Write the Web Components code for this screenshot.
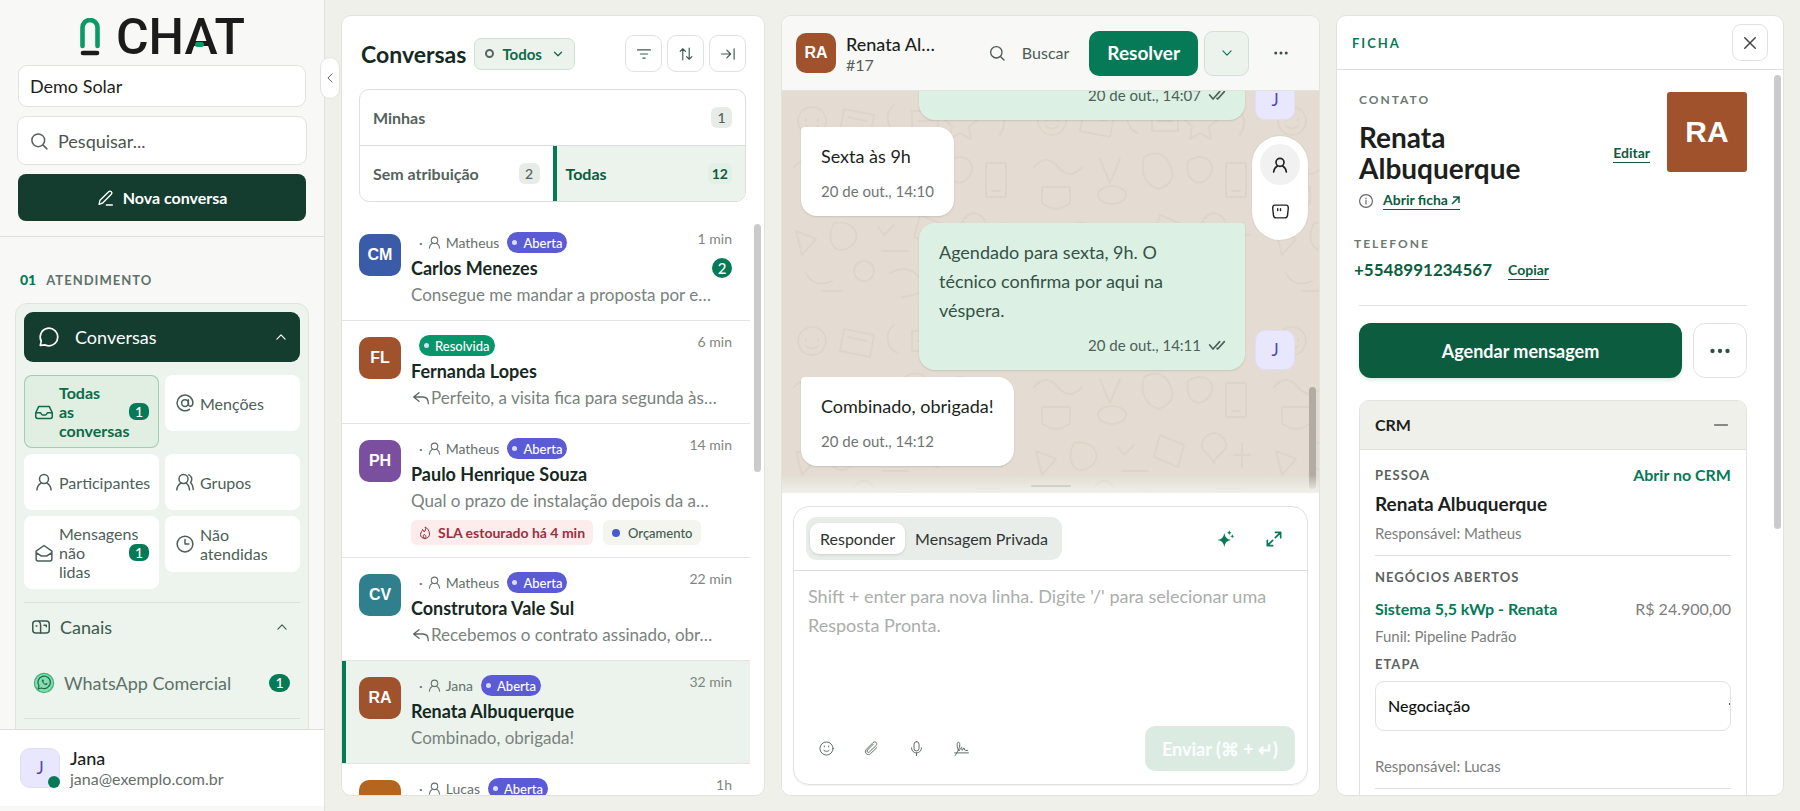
<!DOCTYPE html>
<html lang="pt-BR">
<head>
<meta charset="utf-8">
<meta name="viewport" content="width=device-width, initial-scale=1">
<title>Chat – Conversas</title>
<style>
  :root {
    --bg: #eff0ea; --panel: #fff; --line: #e0e4df; --ink: #1c1f1d; --deep: #143c2f;
    --green: #067a57; --muted: #6f7773; --slate: #4c6058; --mint: #ebf3ec;
  }
  html, body { height: 100%; }
  body { margin: 0; background: var(--bg); color: var(--ink); font: 400 16px/20px Lato, "Open Sans", sans-serif; overflow: hidden; }
</style>
</head>
<body>
<chat-app></chat-app>
<script>
const BASE = `<style>
*{box-sizing:border-box}
:host{display:block}
button,input,select,textarea{font:inherit;color:inherit;margin:0;padding:0;border:0;background:none;text-align:inherit;outline:0}
button{cursor:pointer}
a{color:inherit;text-decoration:none}
h1,h2,h3,p{margin:0;font-weight:inherit;font-size:inherit}
.thumb{position:absolute;width:7px;border-radius:4px;background:#cbcbcb}
</style>`;
function define(name, html) {
  customElements.define(name, class extends HTMLElement {
    connectedCallback() {
      if (this.shadowRoot) return;
      const t = document.createElement('template');
      t.innerHTML = BASE + (typeof html === 'function' ? html(this) : html);
      this.attachShadow({ mode: 'open' }).append(t.content.cloneNode(true));
    }
  });
}

const ICONS = {
  search: '<circle cx="11" cy="11" r="8.500"/><path d="M17.500 17.500l5 5"/>',
  pen: '<path d="M3 21.500l1.500-6L17.500 2.500a2.800 2.800 0 0 1 4 4L8.500 19.500zM14 22.500h9"/>',
  chat: '<path d="M1.500 22l1.200-5A10.500 10.500 0 1 1 7.500 21.500z"/>',
  up: '<path d="M5 15.500l7-7 7 7"/>', down: '<path d="M5 8.500l7 7 7-7"/>', left: '<path d="M17 2L7 12l10 10"/>',
  inbox: '<path d="M1 13L5 4.500h14L23 13v5a2.500 2.500 0 0 1-2.500 2.500h-17A2.500 2.500 0 0 1 1 18zM1 13h6c1 0 1.500 3 3 3h4c1.500 0 2-3 3-3h6"/>',
  at: '<circle cx="12" cy="12" r="4.500"/><path d="M16.500 7.500v6c0 4 6 4 6-1.500A10.500 10.500 0 1 0 18 20.500"/>',
  user: '<circle cx="12" cy="8" r="6"/><path d="M2.500 22.500c.5-5 3-7.500 5.500-9M21.500 22.500c-.5-5-3-7.500-5.500-9"/>',
  users: '<circle cx="10" cy="8" r="6"/><path d="M1 22.500c.5-5 3-7.500 5.500-9M18 22.500c-.5-5-2-7.500-4.500-9M17 2.500c4 1.500 5.500 6 2.500 10.500 2 1.500 3 4 3.500 9"/>',
  mail: '<path d="M1.500 9.500L12 2l10.500 7.500V20a2.500 2.500 0 0 1-2.500 2.500H4A2.500 2.500 0 0 1 1.500 20zM1.500 11.500L8.500 16h7l7-4.500"/>',
  clock: '<circle cx="12" cy="12" r="10.500"/><path d="M12 6v6h5"/>',
  mailbox: '<rect x="1" y="4" width="22" height="16" rx="4"/><path d="M9 4.500c2 1 2.500 3 2.500 5V20M5.500 10.500h1M16 9.500h3v2"/>',
  filter: '<path d="M1 5h22M6 12h12M10 19h4"/>',
  sort: '<path d="M6.500 22V3M2 7.500L6.500 3 11 7.500M17.500 2v19M13 16.500l4.500 4.500 4.500-4.500"/>',
  collapse: '<path d="M1 12h15M10 5.500l6.500 6.500-6.500 6.500M22.500 3v18"/>',
  reply: '<path d="M9 4L1 10.500 9 17M1 10.500h14c5 0 8 3 8 10"/>',
  flame: '<path d="M12 23c-5.500 0-9-3.500-9-8 0-5 4-6 4-10 2 1 3 3 3 5 3-2 4-6 2-10 5 2 9 8 9 14 0 5.500-3.500 9-9 9zM12 23c-4-1-5-4.500-2-8 4 1 5.500 5 2 8z"/>',
  more: '<g fill="currentColor" stroke="none"><circle cx="3" cy="12" r="2.600"/><circle cx="12" cy="12" r="2.600"/><circle cx="21" cy="12" r="2.600"/></g>',
  ticks: '<path d="M1 12l5 6L16 7M12 17l1 1L23 7"/>',
  close: '<path d="M3 3l18 18M21 3L3 21"/>',
  minus: '<path d="M1 12h22"/>',
  info: '<circle cx="12" cy="12" r="11"/><path d="M12 11v6M12 7v1"/>',
  note: '<path d="M4 3h16q3 0 3 4l-1 10q-.5 4-4 4H6q-3.500 0-4-4L1 7q0-4 3-4zM8 8v2.500M12 8v2.500"/>',
  spark: '<g fill="currentColor" stroke="none"><path d="M9.500 3c1.500 7 3.500 9 10 10.500-6.500 1.500-8.500 3.500-10 10.500-1.500-7-3.500-9-10-10.500 6.500-1.500 8.500-3.500 10-10.500zM17 -1c.6 2.400 1.300 3.200 3.700 3.700-2.400.6-3.100 1.300-3.700 3.700-.6-2.400-1.300-3.100-3.700-3.700 2.400-.5 3.100-1.300 3.700-3.700zM21.500 5c.5 2 1.100 2.600 3 3-1.900.5-2.500 1-3 3-.5-2-1.100-2.500-3-3 1.900-.4 2.500-1 3-3z"/></g>',
  expand: '<path d="M14 2h8v8M22 2l-8 8M10 22H2v-8M2 22l8-8"/>',
  smile: '<circle cx="12" cy="12" r="10.500"/><path d="M7.500 14.500c1.500 3 7.500 3 9 0M8.500 8v1.500M15.500 8v1.500"/>',
  clip: '<path d="M15 5L5.500 14.500c-2 2.500 1 5 3 3.200L19.500 7c3-3.500-1.500-7.500-5-4.500L3.500 13.500c-4 5 2.500 11 7 6.800L20.500 10.500"/>',
  mic: '<rect x="8" y="1" width="8" height="15" rx="4"/><path d="M4 11c0 11 16 11 16 0M12 19v4.500"/>',
  sign: '<path d="M1 19h22M2 23c5-7 8-14 7-19-.5-3-4-3-4 1 0 5 1 9 3 11 2-3 3-6 4-6s0 5 1 5 2-4 3-4 0 4 2 4h4"/>',
  wa: '<circle cx="12" cy="12" r="11.500" fill="#86dcae" stroke="#3fb578"/><path d="M5 19l1-3.500A7.500 7.500 0 1 1 9 18z" stroke="#1f6a4b"/><path d="M9.500 8c-1 1.500 3 7 5.500 6.500l1.500-1.500-2-1-1 1c-1-.5-2-1.500-2.300-2.500l.8-.8-1-2z" fill="#1f6a4b" stroke="none"/>'
};
define('ui-icon', el => `<style>:host{display:inline-block;flex:none;line-height:0}svg{width:var(--s,18px);height:var(--s,18px);overflow:visible}</style>
<svg viewBox="0 0 24 24" fill="none" stroke="currentColor" stroke-width="${el.getAttribute('w') || 2}" stroke-linecap="round" stroke-linejoin="round" aria-hidden="true">${ICONS[el.getAttribute('name')]}</svg>`);

define('user-avatar', el => `<style>
:host{flex:none;display:grid;place-items:center;width:var(--a,42px);height:var(--a,42px);border-radius:var(--r,10px);background:${el.getAttribute('tone') || '#a0522d'};color:#fff;font:700 var(--f,16px)/20px "Liberation Sans",Arial,sans-serif}
:host([agent]){background:#e9e7fd;color:#4f46b8;border:1px solid #e0def5;font:400 17px/20px Lato,sans-serif}
</style><slot></slot>`);

define('status-pill', el => `<style>
:host{display:inline-flex;align-items:center;gap:6px;height:21px;padding:0 5px;border-radius:11px;background:${el.hasAttribute('done') ? '#079669' : '#5b5bd6'};color:#fff;font-size:13px;line-height:20px;font-weight:500}
i{width:5px;height:5px;border-radius:50%;background:#d9dbff}</style><i></i><slot></slot>`);

define('nav-tile', el => `<style>
button{display:flex;align-items:center;gap:6px;width:100%;min-height:56px;padding:8px 10px 8px 11px;border-radius:8px;background:#fff;color:var(--slate);line-height:19px}
span{flex:1;min-width:0}
b{flex:none;margin-left:10px;width:20px;height:17px;border-radius:7px;background:var(--green);color:#fff;font-weight:500;font-size:14px;line-height:17px;text-align:center}
:host([on]) button{background:#e0efe2;box-shadow:inset 0 0 0 1px #a3ccb2;color:#0f6a49;font-weight:700}
</style><button><ui-icon name="${el.getAttribute('icon')}"></ui-icon><span><slot></slot></span>${el.hasAttribute('count') ? `<b>${el.getAttribute('count')}</b>` : ''}</button>`);

define('app-sidebar', `<style>
:host{position:relative;display:flex;flex-direction:column;background:#f8f9f7;border-right:1px solid #dfe3de;min-height:0}
.top{display:flex;flex-direction:column;gap:9px;padding:17px 18px 15px;border-bottom:1px solid #dcdfdb}
.logo{display:flex;align-items:center;justify-content:center;gap:16px;height:39px;padding-left:1px}
.logo svg{width:20px;height:38px}
.word{position:relative;font:500 50px/42px Roboto,sans-serif;color:#1b1b1b}
.word i{position:absolute;left:79px;top:26px;width:9px;height:5px;border-radius:3px;background:#0a9a68}
select,.search{border:1px solid var(--line);border-radius:9px;background:#fff}
select{appearance:none;height:42px;padding:0 11px;font-size:18px}
.search{display:flex;align-items:center;gap:10px;height:49px;margin:0 -1px;padding:0 12px;color:#5a625e}
input{flex:1;min-width:0;font-size:18px}
input::placeholder{color:#4d5451;opacity:1}
.new{display:flex;align-items:center;justify-content:center;gap:10px;height:47px;border-radius:8px;background:var(--deep);color:#fff;font-weight:700}
nav{flex:1;min-height:0;overflow:hidden;padding:33px 15px 0}
.label{display:flex;gap:10px;padding-left:5px;font-size:13px;font-weight:700;letter-spacing:1px;color:#5f7169}
.label b{color:var(--green);letter-spacing:0;font-size:14px}
.card{margin-top:13px;padding:8px 8px 100px;border:1px solid var(--line);border-radius:12px;background:#edf4ee}
.row{display:flex;align-items:center;width:100%;font-size:18px}
.row span{flex:1}
.head{height:50px;gap:16px;padding:0 12px 0 15px;border-radius:9px;background:var(--deep);color:#fff}
.tiles{display:grid;grid-template-columns:repeat(2,minmax(0,1fr));gap:6px;align-items:start;margin-top:13px}
hr{margin:0;border:0;border-top:1px solid #d9e1da}
.tiles+hr{margin-top:13px}
.ch{height:48px;gap:10px;padding:0 11px 0 8px;color:#3d5a4d}
.wa{height:64px;gap:10px;padding:0 10px;margin-bottom:3px;color:#5d7167}
.wa b{width:21px;height:18px;border-radius:9px;background:var(--green);color:#fff;font-size:14px;line-height:18px;font-weight:500;text-align:center}
footer{display:flex;gap:10px;align-items:center;height:77px;margin-bottom:5px;padding:0 20px;border-top:1px solid #dcdfdb;background:#fff}
.me{position:relative}.me i{position:absolute;right:0;bottom:0;width:12px;height:12px;border-radius:50%;background:var(--green)}
footer strong{display:block;font-weight:500;font-size:18px;line-height:21px}
footer span{color:#656d69}
.fold{position:absolute;left:320px;top:57px;z-index:2;display:grid;place-items:center;width:20px;height:42px;border:1px solid var(--line);border-radius:10px;background:#fff;color:#444}
</style>
<div class="top">
  <div class="logo"><svg viewBox="0 0 20 38" fill="none" stroke-linecap="round" aria-hidden="true"><path d="M2.500 28V9.500a7.500 7.500 0 0 1 15 0V28" stroke="#0a9a68" stroke-width="4.600"/><path d="M3 35h14" stroke="#1b1b1b" stroke-width="4.600"/></svg><div class="word">CHAT<i></i></div></div>
  <select aria-label="Conta"><option>Demo Solar</option></select>
  <label class="search"><ui-icon name="search"></ui-icon><input type="search" placeholder="Pesquisar..." aria-label="Pesquisar"></label>
  <button class="new"><ui-icon name="pen" style="--s:16px"></ui-icon>Nova conversa</button>
</div>
<nav>
  <div class="label"><b>01</b>ATENDIMENTO</div>
  <div class="card">
    <button class="row head"><ui-icon name="chat" style="--s:20px"></ui-icon><span>Conversas</span><ui-icon name="up" style="--s:14px"></ui-icon></button>
    <div class="tiles">
      <nav-tile icon="inbox" count="1" on>Todas<br>as conversas</nav-tile><nav-tile icon="at">Menções</nav-tile>
      <nav-tile icon="user">Participantes</nav-tile><nav-tile icon="users">Grupos</nav-tile>
      <nav-tile icon="mail" count="1">Mensagens não<br>lidas</nav-tile><nav-tile icon="clock">Não atendidas</nav-tile>
    </div>
    <hr>
    <button class="row ch"><ui-icon name="mailbox"></ui-icon><span>Canais</span><ui-icon name="up" style="--s:14px"></ui-icon></button>
    <a class="row wa" href="#whatsapp"><ui-icon name="wa" w="1.500" style="--s:20px"></ui-icon><span>WhatsApp Comercial</span><b>1</b></a>
    <hr>
  </div>
</nav>
<footer><div class="me"><user-avatar agent style="--a:40px">J</user-avatar><i></i></div><div><strong>Jana</strong><span>jana@exemplo.com.br</span></div></footer>
<button class="fold" aria-label="Recolher menu"><ui-icon name="left" style="--s:10px"></ui-icon></button>`);

define('conversation-item', el => {
  const a = n => el.getAttribute(n);
  return `<style>
:host{display:flex;gap:10px;padding:14px 18px 12px 17px;border-bottom:1px solid #e3e5e2}
:host([on]){background:#ebf3ec;box-shadow:inset 4px 0 #067a57}
user-avatar{margin-top:2px}
.body{flex:1;min-width:0}
.meta{display:flex;align-items:center;height:21px;padding-left:8px;font-size:14px;color:#65716b}
.meta ui-icon{margin:0 5px 0 5px}
.meta status-pill{margin-left:8px}
.meta status-pill:first-child{margin-left:0}
.meta time{margin:-7px 0 0 auto;color:#7f8682}
.name{display:flex;justify-content:space-between;align-items:center;margin-top:1px;height:28px;font-size:18px;font-weight:700;color:#16291f}
.name b{width:20px;height:20px;border-radius:50%;background:var(--green);color:#fff;font-weight:500;font-size:15px;text-align:center}
.msg{display:flex;align-items:center;gap:2px;height:26px;padding-right:20px;font-size:17px;color:#79827d}
.msg span{white-space:nowrap}
.msg ui-icon{margin-left:2px;color:#5e6662}
</style><user-avatar tone="${a('tone')}">${a('initials')}</user-avatar>
<div class="body"><div class="meta">${a('agent') ? `<span>·</span><ui-icon name="user" style="--s:13px"></ui-icon><span>${a('agent')}</span><status-pill>Aberta</status-pill>` : '<status-pill done>Resolvida</status-pill>'}<time>${a('time')}</time></div>
<h3 class="name"><span>${a('name')}</span>${a('unread') ? `<b>${a('unread')}</b>` : ''}</h3>
<p class="msg">${el.hasAttribute('replied') ? '<ui-icon name="reply" style="--s:16px"></ui-icon>' : ''}<span>${a('text') || ''}</span></p><slot></slot></div>`;
});

define('conversation-list', `<style>
:host{position:relative;display:flex;flex-direction:column;min-height:0;overflow:hidden;background:#fff;border:1px solid var(--line);border-radius:10px}
header{display:flex;align-items:center;gap:5px;padding:19px 18px 0 19px}
h2{font-size:23px;line-height:36px;font-weight:700;color:#16291f;margin-right:3px}
.all{display:flex;align-items:center;gap:8px;height:32px;padding:0 10px;border:1px solid #cfe0d2;border-radius:7px;background:#ebf3ec;color:#0f6a49;font-size:15px;font-weight:700}
.all i{width:9px;height:9px;border:2px solid #58675f;border-radius:50%}
.all ui-icon{margin-left:2px}
.sq{display:grid;place-items:center;width:37px;height:37px;border:1px solid var(--line);border-radius:9px;background:#fff;color:#3f5a4e}
.push{margin-left:auto}
.tabs{display:grid;grid-template-columns:1fr 1fr;margin:17px 18px 0 17px;border:1px solid #dcdfdb;border-radius:10px;overflow:hidden}
.tabs button{display:flex;align-items:center;justify-content:space-between;height:55px;padding:0 13px;font-size:16px;font-weight:700;color:#53635b}
.tabs button:first-child{grid-column:1/3;height:56px;border-bottom:1px solid #dcdfdb}
.tabs b{min-width:21px;height:21px;padding:0 4px;border-radius:6px;background:#e8ece8;font-size:14px;line-height:21px;font-weight:500;text-align:center}
.tabs .on{background:#ebf3ec;border-left:4px solid var(--green);padding-left:9px;color:#0c5c40}
.tabs .on b{background:#e2f0e5;font-weight:700}
.list{flex:1;min-height:0;overflow:hidden;margin-top:16px;padding-right:14px}
.tags{display:flex;gap:10px;margin-top:6px}
.tags span{display:flex;align-items:center;gap:8px;height:25px;padding:0 9px;border-radius:6px;font-size:13px}
.sla{background:#fdecec;color:#9b3040;font-weight:700}
.tags .sla{font-size:14px;gap:7px;padding:0 8px}
.tag{background:#f4f5ef;color:#3f5a4e;font-weight:500}
.tag i{width:8px;height:8px;border-radius:50%;background:#4a5bd0}
.thumb{right:3px;top:208px;height:248px}
</style>
<header><h2>Conversas</h2><button class="all"><i></i>Todos<ui-icon name="down" w="2.500" style="--s:12px"></ui-icon></button>
<button class="sq push" aria-label="Filtrar"><ui-icon name="filter" style="--s:14px"></ui-icon></button><button class="sq" aria-label="Ordenar"><ui-icon name="sort" style="--s:14px"></ui-icon></button><button class="sq" aria-label="Expandir"><ui-icon name="collapse" style="--s:14px"></ui-icon></button></header>
<div class="tabs"><button>Minhas<b>1</b></button><button>Sem atribuição<b>2</b></button><button class="on">Todas<b>12</b></button></div>
<div class="list">
<conversation-item tone="#3a5ba8" initials="CM" agent="Matheus" time="1 min" name="Carlos Menezes" unread="2" text="Consegue me mandar a proposta por e…"></conversation-item>
<conversation-item tone="#a0522d" initials="FL" time="6 min" name="Fernanda Lopes" replied text="Perfeito, a visita fica para segunda às…"></conversation-item>
<conversation-item tone="#7b4fa0" initials="PH" agent="Matheus" time="14 min" name="Paulo Henrique Souza" text="Qual o prazo de instalação depois da a…"><div class="tags"><span class="sla"><ui-icon name="flame" style="--s:12px"></ui-icon>SLA estourado há 4 min</span><span class="tag"><i></i>Orçamento</span></div></conversation-item>
<conversation-item tone="#2f7f8c" initials="CV" agent="Matheus" time="22 min" name="Construtora Vale Sul" replied text="Recebemos o contrato assinado, obr…"></conversation-item>
<conversation-item on tone="#a0522d" initials="RA" agent="Jana" time="32 min" name="Renata Albuquerque" text="Combinado, obrigada!"></conversation-item>
<conversation-item tone="#b5651d" initials="" agent="Lucas" time="1h" name=""></conversation-item>
</div><div class="thumb"></div>`);

define('chat-bubble', el => `<style>
:host{display:flex;align-items:flex-end;gap:10px;flex:none}
:host([out]){justify-content:flex-end}
.b{padding:15px 20px;border-radius:4px 16px 16px 16px;background:#fff;box-shadow:0 1px 2px rgba(0,0,0,.12);font-size:18px;line-height:29px}
:host([out]) .b{flex:0 0 66%;border-radius:16px 4px 16px 16px;background:#dcf1e4;color:#355246}
.t{display:flex;align-items:center;gap:8px;margin-top:10px;font-size:15px;line-height:20px;color:#6f7572}
:host([out]) .t{justify-content:flex-end;color:#4c6058}
</style><div class="b"><slot></slot><div class="t"><time>${el.getAttribute('time')}</time>${el.hasAttribute('out') ? '<ui-icon name="ticks" w="2.500" style="--s:16px"></ui-icon>' : ''}</div></div>${el.hasAttribute('out') ? '<user-avatar agent style="--a:40px">J</user-avatar>' : ''}`);

const DOODLE = encodeURIComponent(`<svg xmlns="http://www.w3.org/2000/svg" width="240" height="220" fill="none" stroke="#8a7a68" stroke-opacity=".07" stroke-width="2" stroke-linecap="round" stroke-linejoin="round"><circle cx="30" cy="30" r="14"/><path d="M24 28v2M36 28v2M24 35q6 5 12 0M62 18l30 6-4 22-30-6zM66 26l18 4M112 14c-10 8-8 24 4 28M130 20h26v20h-26zM136 30h14M178 16l6 10 12 2-9 8 2 12-11-6-10 6 2-12-8-8 11-2zM214 18q14 8 4 26M12 76q12-14 24 0t24 0M20 96h28v16q-14 12-28 0zM78 68l10 24 10-24M76 104a14 9 0 1 0 28 0a14 9 0 1 0-28 0M122 66q18-10 26 8t-12 24q-20-8-14-32M166 70c14-10 30 0 22 14s-26 8-22-14M204 72h20v34h-20zM210 100h8M14 140l20 8-14 16zM52 132c20-4 30 14 16 24s-26-6-16-24M96 136l6 8 10-10M100 160h26M138 124l24 10-6 22-24-10zM182 128q10-12 20 0c8 12-10 16-10 24-2-8-18-12-10-24M220 132v24M212 144h16M24 182q8 16 26 8M40 200h20M72 180a10 10 0 1 0 20 0a10 10 0 1 0-20 0M108 182q20-10 30 6t-18 18M152 178l10 24 14-18M192 178h28l-6 24h-18z"/></svg>`);

define('message-composer', `<style>
:host{background:#fff;padding:13px 11px 10px}
.box{display:flex;flex-direction:column;height:279px;border:1px solid #dfe2df;border-radius:16px;box-shadow:0 1px 2px rgba(0,0,0,.06)}
.bar{display:flex;align-items:center;height:64px;padding:0 25px 0 12px;border-bottom:1px solid #dcdfdb;color:var(--green)}
.seg{display:flex;align-items:center;height:43px;margin-right:auto;padding:0 4px;border-radius:11px;background:#e9ede9;color:#2f3532}
.seg button{height:31px;padding:0 10px;border-radius:9px}
.seg .on{background:#fff;box-shadow:0 1px 3px rgba(0,0,0,.12)}
.bar>button{line-height:0}
.bar>button+button{margin-left:32px}
textarea{flex:1;padding:11px 14px;resize:none;font-size:18px;line-height:29px}
textarea::placeholder{color:#a9aeab;opacity:1}
.foot{display:flex;align-items:center;gap:30px;padding:0 12px 13px 25px;color:#56655d}
.foot button{line-height:0}
.foot .send{display:flex;align-items:center;gap:5px;height:45px;margin-left:auto;padding:0 17px;border-radius:10px;background:#dcebe2;color:#fbfefc;font-size:18px;line-height:24px;font-weight:700}
</style><div class="box"><div class="bar"><div class="seg"><button class="on">Responder</button><button>Mensagem Privada</button></div><button aria-label="Assistente"><ui-icon name="spark" style="--s:16px"></ui-icon></button><button aria-label="Expandir"><ui-icon name="expand" w="2.500" style="--s:16px"></ui-icon></button></div>
<textarea aria-label="Mensagem" placeholder="Shift + enter para nova linha. Digite '/' para selecionar uma Resposta Pronta."></textarea>
<div class="foot"><button aria-label="Emoji"><ui-icon name="smile" w="1.500" style="--s:15px"></ui-icon></button><button aria-label="Anexar"><ui-icon name="clip" w="1.500" style="--s:15px"></ui-icon></button><button aria-label="Áudio"><ui-icon name="mic" w="1.500" style="--s:15px"></ui-icon></button><button aria-label="Assinatura"><ui-icon name="sign" w="1.500" style="--s:15px"></ui-icon></button>
<button class="send">Enviar (⌘ + ↵)</button></div></div>`);

define('chat-thread', `<style>
:host{display:flex;flex-direction:column;min-width:0;min-height:0;overflow:hidden;background:#fff;border:1px solid var(--line);border-radius:10px}
header{display:flex;align-items:center;height:75px;padding:0 14px;background:#f8f9f7;border-bottom:1px solid var(--line)}
.who{width:110px;margin:0 auto 0 10px}
.who h2{font-size:18px;line-height:22px;font-weight:500}
.who p{font-size:16px;line-height:19px;color:#53605a}
.find{display:flex;align-items:center;gap:17px;margin-right:20px;font-size:16px;color:#4c5a53}
.res{height:45px;padding:0 18px;border-radius:10px;background:var(--green);color:#fff;font-size:19px;font-weight:700}
.dd{display:grid;place-items:center;width:45px;height:45px;margin-left:6px;border:1px solid #d3e1d5;border-radius:9px;background:#ebf3ec;color:var(--green)}
.more{display:grid;margin:0 17px 0 25px;color:#3d4f46}
.area{position:relative;flex:1;min-height:0;overflow:hidden;display:flex;flex-direction:column;justify-content:flex-end;gap:7px;padding:0 24px 27px 19px;background:#e4dcd2 url("data:image/svg+xml,${DOODLE}")}
.tools{position:absolute;right:11px;top:45px;display:flex;flex-direction:column;gap:6px;padding:8px;border-radius:28px;background:#fff;box-shadow:0 0 2px rgba(0,0,0,.12);color:#222}
.tools button{display:grid;place-items:center;width:40px;height:41px;border-radius:50%}
.tools .on{background:#f1f1f1}
.thumb{right:3px;bottom:4px;height:102px;background:#b3aca4}
.fade{position:absolute;inset:auto 0 0;height:18px;background:linear-gradient(rgba(239,240,234,0),#eff0ea)}
.fade i{position:absolute;left:calc(50% - 20px);top:10px;width:40px;height:2px;border-radius:1px;background:#ccd3cc}
</style>
<header><user-avatar style="--a:40px">RA</user-avatar><div class="who"><h2>Renata Al…</h2><p>#17</p></div>
<button class="find"><ui-icon name="search" style="--s:16px"></ui-icon>Buscar</button><button class="res">Resolver</button><button class="dd" aria-label="Mais estados"><ui-icon name="down" style="--s:14px"></ui-icon></button><button class="more" aria-label="Mais ações"><ui-icon name="more" style="--s:14px"></ui-icon></button></header>
<div class="area">
<chat-bubble out time="20 de out., 14:07"></chat-bubble>
<chat-bubble time="20 de out., 14:10">Sexta às 9h</chat-bubble>
<chat-bubble out time="20 de out., 14:11">Agendado para sexta, 9h. O<br>técnico confirma por aqui na<br>véspera.</chat-bubble>
<chat-bubble time="20 de out., 14:12">Combinado, obrigada!</chat-bubble>
<div class="thumb"></div><div class="fade"><i></i></div>
<div class="tools"><button class="on" aria-label="Contato"><ui-icon name="user" w="2.500" style="--s:16px"></ui-icon></button><button aria-label="Notas"><ui-icon name="note" style="--s:17px"></ui-icon></button></div>
</div><message-composer></message-composer>`);

define('contact-panel', `<style>
:host{position:relative;display:flex;flex-direction:column;min-height:0;overflow:hidden;background:#fff;border:1px solid var(--line);border-radius:10px}
header{flex:none;display:flex;align-items:center;justify-content:space-between;height:54px;padding:0 15px;border-bottom:1px solid #dcdfdb}
header h2{font-size:13px;font-weight:700;letter-spacing:2px;color:var(--green)}
header button{display:grid;place-items:center;width:36px;height:37px;border:1px solid var(--line);border-radius:9px;color:#444}
.body{flex:1;min-height:0;overflow:hidden;padding:22px 36px 0 22px}
.cap{display:block;font-size:12px;line-height:16px;font-weight:700;letter-spacing:2px;color:#6a7a72}
.id{display:flex;gap:17px}
.id>div{flex:1;min-width:0}
h1{margin-top:14px;font-size:28px;line-height:31px;font-weight:700}
.lnk{border-bottom:1px solid #0c5c40;font-size:14px;line-height:18px;font-weight:700;color:#0c5c40}
.edit{align-self:flex-start;margin-top:52px}
.open{display:flex;align-items:center;gap:10px;margin-top:7px;color:#666}
.open .lnk{display:flex;align-items:center;gap:3px}
.tel{margin:26px 0 23px -5px}
.tel div{display:flex;align-items:center;gap:16px;margin-top:6px}
.tel strong{font-size:17px;line-height:24px;color:#0c5c40}
hr{margin:0;border:0;border-top:1px solid #dfe2df}
.act{display:flex;gap:11px;margin:17px 0 22px}
.act button{height:55px;border-radius:12px;text-align:center}
.go{flex:1;background:#0c5c40;color:#fff;font-size:18px;font-weight:700;box-shadow:0 2px 4px rgba(12,92,64,.15)}
.dots{display:grid;place-items:center;width:54px;border:1px solid var(--line)!important;color:#2f4f42}
.crm{border:1px solid var(--line);border-radius:10px 10px 0 0;height:600px;overflow:hidden}
.crm h2{display:flex;justify-content:space-between;align-items:center;height:49px;padding:0 18px 0 15px;background:#eff0ea;border-bottom:1px solid var(--line);font-size:16px;font-weight:700}
.crm h2 ui-icon{color:#666}
.in{padding:15px 15px 0}
.in .cap{font-size:13px;line-height:20px;letter-spacing:1px;color:#5b625e}
.r{display:flex;justify-content:space-between;align-items:center}
.r a{font-weight:700;color:var(--green)}
.in h3{margin:7px 0;font-size:19px;line-height:24px;font-weight:700}
.in p{font-size:15px;line-height:20px;color:#7b807d}
.in .r a{font-size:16px}
.price{color:#7b807d}
.in hr{margin:12px 0 11px}
.deal{margin:12px 0 7px}
.in p+.cap{margin-top:8px}
select{appearance:none;display:block;width:100%;height:50px;margin:7px 0 25px;padding:0 12px;border:1px solid var(--line);border-radius:9px;background:linear-gradient(#555,#555) right 21px/1px 2px no-repeat #fff;color:#111;font-weight:500}
.thumb{right:2px;top:59px;height:454px}
</style>
<header><h2>FICHA</h2><button aria-label="Fechar"><ui-icon name="close" w="2.500" style="--s:14px"></ui-icon></button></header>
<div class="body">
<div class="id"><div><span class="cap">CONTATO</span><h1>Renata Albuquerque</h1>
<div class="open"><ui-icon name="info" w="2" style="--s:14px"></ui-icon><a class="lnk" href="#ficha">Abrir ficha <svg width="9" height="9" viewBox="0 0 9 9" fill="none" stroke="currentColor" stroke-width="1.500" aria-hidden="true"><path d="M1 8L8 1M2 1h6v6"/></svg></a></div></div>
<a class="lnk edit" href="#editar">Editar</a><user-avatar style="--a:80px;--r:3px;--f:30px">RA</user-avatar></div>
<div class="tel"><span class="cap">TELEFONE</span><div><strong>+5548991234567</strong><a class="lnk" href="#copiar">Copiar</a></div></div>
<hr>
<div class="act"><button class="go">Agendar mensagem</button><button class="dots" aria-label="Mais"><ui-icon name="more" style="--s:20px"></ui-icon></button></div>
<section class="crm"><h2>CRM<ui-icon name="minus" w="2.500" style="--s:14px"></ui-icon></h2>
<div class="in"><div class="r"><span class="cap">PESSOA</span><a href="#crm">Abrir no CRM</a></div>
<h3>Renata Albuquerque</h3><p>Responsável: Matheus</p><hr>
<span class="cap">NEGÓCIOS ABERTOS</span>
<div class="r deal"><a href="#negocio">Sistema 5,5 kWp - Renata</a><span class="price">R$ 24.900,00</span></div>
<p>Funil: Pipeline Padrão</p>
<label class="cap" for="etapa">ETAPA</label><select id="etapa"><option>Negociação</option></select>
<p>Responsável: Lucas</p><hr></div></section>
</div><div class="thumb"></div>`);

define('chat-app', `<style>
:host{display:grid;grid-template-columns:325px minmax(0,1fr);height:100vh}
main{display:grid;grid-template-columns:424px minmax(0,1fr) 448px;grid-template-rows:minmax(0,1fr);gap:16px;padding:15px 16px;min-height:0}
</style><app-sidebar></app-sidebar><main><conversation-list></conversation-list><chat-thread></chat-thread><contact-panel></contact-panel></main>`);
</script>
</body>
</html>
